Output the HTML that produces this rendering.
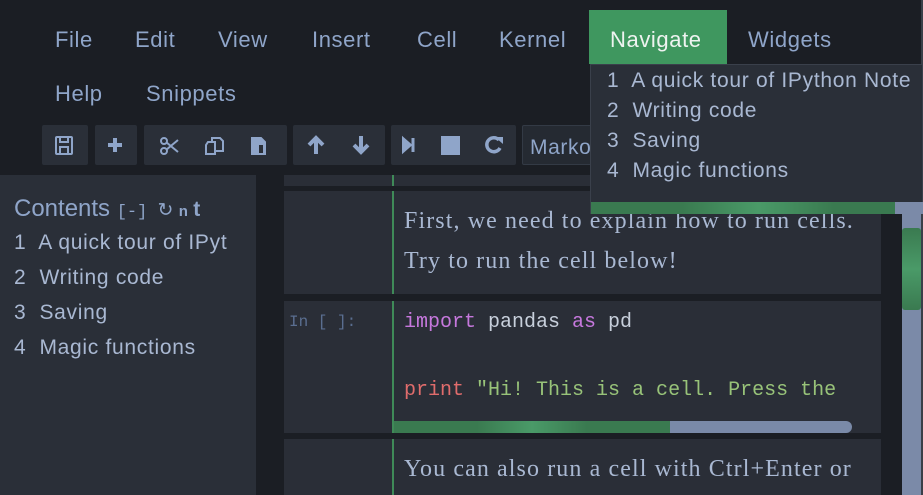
<!DOCTYPE html><html><head><style>
*{margin:0;padding:0;box-sizing:border-box}
body{width:923px;height:495px;overflow:hidden;background:#1b1e24;font-family:"Liberation Sans",sans-serif;position:relative}
.a{position:absolute;white-space:nowrap}
.m{color:#8fa5c9;font-size:22px;letter-spacing:0.6px}
.tb{position:absolute;top:125px;height:40px;background:#2a2f38;border-radius:2px}
.toc{color:#a9b8d2;font-size:21px;letter-spacing:0.7px}
.ser{font-family:"Liberation Serif",serif;color:#a9b8d2;font-size:24px;letter-spacing:1.1px}
.mono{font-family:"Liberation Mono",monospace;font-size:20px}
</style></head><body>
<div class="a m" style="left:55px;top:27px">File</div>
<div class="a m" style="left:135px;top:27px">Edit</div>
<div class="a m" style="left:218px;top:27px">View</div>
<div class="a m" style="left:312px;top:27px">Insert</div>
<div class="a m" style="left:417px;top:27px">Cell</div>
<div class="a m" style="left:499px;top:27px">Kernel</div>
<div class="a" style="left:589px;top:10px;width:138px;height:54px;background:#3f975f"></div>
<div class="a m" style="left:610px;top:27px;color:#eef3f0">Navigate</div>
<div class="a m" style="left:748px;top:27px">Widgets</div>
<div class="a m" style="left:55px;top:81px">Help</div>
<div class="a m" style="left:146px;top:81px">Snippets</div>

<div class="tb" style="left:42px;width:46px"></div>
<div class="tb" style="left:95px;width:42px"></div>
<div class="tb" style="left:144px;width:143px"></div>
<div class="tb" style="left:293px;width:92px"></div>
<div class="tb" style="left:391px;width:125px"></div>
<div class="tb" style="left:522px;width:80px;background:#252a32;border:1px solid #333a45"></div>
<div class="a m" style="left:530px;top:136px;font-size:21px">Marko</div>
<svg class="a" style="left:42px;top:125px" width="480" height="40" fill="none" stroke="#8fa5c9" stroke-width="2">
<rect x="14" y="12" width="16" height="17" rx="1"/><rect x="18" y="12" width="8" height="5"/><rect x="18" y="22" width="8" height="7"/>
<path d="M73 13v14M66 20h14" stroke-width="4"/>
<circle cx="122" cy="16" r="3"/><circle cx="122" cy="26" r="3"/><path d="M124 17l12 10M124 25l12-10"/>
<path d="M166 17h7v12h-9v-9z M170 17v-4h8l3 3v10h-7"/>
<path d="M210 13h9l4 4v12h-13z" fill="#8fa5c9"/><path d="M216 19h6v10h-6z" fill="#2a2f38"/>
<path d="M274 29V13M267 20l7-7 7 7" stroke-width="4"/>
<path d="M319 11v16M312 20l7 7 7-7" stroke-width="4"/>
<path d="M361 13l8 7-8 7z" fill="#8fa5c9"/><path d="M371 13v14" stroke-width="3"/>
<rect x="400" y="12" width="17" height="17" fill="#8fa5c9"/>
<path d="M457 15a7 7 0 1 0 1 8" stroke-width="3.5"/><path d="M453 12h8v7z" fill="#8fa5c9" stroke="none"/>
</svg>

<div class="a" style="left:0;top:175px;width:256px;height:320px;background:#2a2f38"></div>
<div class="a" style="left:14px;top:195px;color:#8fa5c9;font-size:24px">Contents <span style="font-size:17px;font-family:'Liberation Mono',monospace">[-] </span><span style="font-size:19px">↻ <span style="font-size:15px;font-weight:bold">n</span> <b style="font-size:21px">t</b></span></div>
<div class="a toc" style="left:14px;top:231px">1&nbsp; A quick tour of IPyt</div>
<div class="a toc" style="left:14px;top:266px">2&nbsp; Writing code</div>
<div class="a toc" style="left:14px;top:301px">3&nbsp; Saving</div>
<div class="a toc" style="left:14px;top:336px">4&nbsp; Magic functions</div>

<div class="a" style="left:284px;top:175px;width:597px;height:11px;background:#2a2e37"></div>
<div class="a" style="left:284px;top:191px;width:597px;height:103px;background:#2a2e37"></div>
<div class="a" style="left:284px;top:301px;width:597px;height:132px;background:#2a2e37"></div>
<div class="a" style="left:284px;top:439px;width:597px;height:56px;background:#2a2e37"></div>
<div class="a" style="left:392px;top:175px;width:2px;height:11px;background:#3f8a58"></div>
<div class="a" style="left:392px;top:191px;width:2px;height:103px;background:#3f8a58"></div>
<div class="a" style="left:392px;top:301px;width:2px;height:132px;background:#3f8a58"></div>
<div class="a" style="left:392px;top:439px;width:2px;height:56px;background:#3f8a58"></div>
<div class="a ser" style="left:404px;top:208px">First, we need to explain how to run cells.</div>
<div class="a ser" style="left:404px;top:248px">Try to run the cell below!</div>
<div class="a mono" style="left:289px;top:313px;color:#5a6e90;font-size:16px">In [ ]:</div>
<div class="a mono" style="left:404px;top:311px;color:#c8d0dc"><span style="color:#c678dd">import</span> pandas <span style="color:#c678dd">as</span> pd</div>
<div class="a mono" style="left:404px;top:379px"><span style="color:#e06c6c">print</span> <span style="color:#98c379">"Hi! This is a cell. Press the</span></div>
<div class="a" style="left:394px;top:421px;width:458px;height:12px;background:#7a8aa8;border-radius:0 6px 6px 0"></div>
<div class="a" style="left:394px;top:421px;width:276px;height:12px;background:linear-gradient(90deg,#3a7a50 30%,#4a9a68 50%,#3a7a50 70%)"></div>
<div class="a ser" style="left:404px;top:456px">You can also run a cell with Ctrl+Enter or</div>

<div class="a" style="left:902px;top:200px;width:19px;height:295px;background:#7b8aa8"></div>
<div class="a" style="left:902px;top:228px;width:19px;height:82px;background:linear-gradient(180deg,#3a7a50,#4a9a68,#3a7a50);border-radius:3px"></div>
<div class="a" style="left:921px;top:0;width:2px;height:495px;background:#3a3f48"></div>

<div class="a" style="left:590px;top:64px;width:333px;height:150px;background:#2a2f38;border:1px solid #3a404b"></div>
<div class="a toc" style="left:607px;top:69px">1&nbsp; A quick tour of IPython Note</div>
<div class="a toc" style="left:607px;top:99px">2&nbsp; Writing code</div>
<div class="a toc" style="left:607px;top:129px">3&nbsp; Saving</div>
<div class="a toc" style="left:607px;top:159px">4&nbsp; Magic functions</div>
<div class="a" style="left:591px;top:202px;width:332px;height:12px;background:#7b8aa8"></div>
<div class="a" style="left:591px;top:202px;width:304px;height:12px;background:linear-gradient(90deg,#3a7a50 30%,#4a9a68 55%,#3a7a50 80%)"></div>
</body></html>
